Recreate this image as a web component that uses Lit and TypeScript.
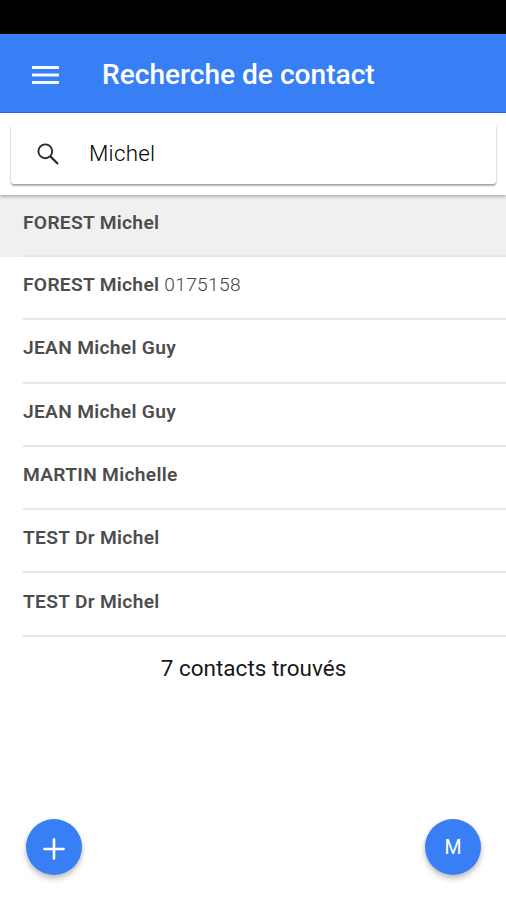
import { LitElement, html, css } from "lit";
import { customElement, state } from "lit/decorators.js";

interface Contact { name: string; extra?: string; }

@customElement("app-root")
export class AppRoot extends LitElement {
  static styles = css`
    :host { display: flex; flex-direction: column; position: relative; height: 900px; box-sizing: border-box; background: #fff; font-family: Roboto, sans-serif; overflow: hidden; }
    .status { height: 34px; background: #000; flex: none; }
    .bar { height: 79px; flex: none; background: #387ef5; color: #fff; display: flex; align-items: center; padding-left: 32px; box-sizing: border-box; border-bottom: 1px solid #2868da; }
    .menu { width: 27px; height: 18px; margin-top: 3px; }
    .title { margin: 3px 0 0 43px; font-size: 28.1px; line-height: 36px; font-weight: 500; white-space: nowrap; }
    .searchbar { flex: none; height: 82px; box-sizing: border-box; padding: 11px 10px 11px 11px; background: #fff; box-shadow: 0 2px 3px rgba(0,0,0,.26); position: relative; }
    .field { height: 60px; border-radius: 3px; background: #fff; display: flex; align-items: center; box-shadow: 0 2px 2px rgba(0,0,0,.25), 0 1px 2px rgba(0,0,0,.2); }
    .search { width: 22px; height: 22px; margin-left: 26px; }
    .query { margin: -3px 0 0 30px; font-size: 22.4px; font-weight: 300; letter-spacing: .25px; color: #000; line-height: 28px; }
    .list { list-style: none; margin: 0; padding: 0; flex: none; }
    .row { height: 63.3px; box-sizing: border-box; padding-left: 23px; }
    .row.active { background: #f0f0f0; height: 62px; }
    .label { height: 100%; box-sizing: border-box; border-bottom: 2px solid #e7e7e7; display: flex; align-items: center; padding-bottom: 5px; font-size: 19.2px; letter-spacing: .3px; line-height: 24px; font-weight: 300; color: #444; white-space: pre; }
    .label b { font-weight: 600; color: #4d4d4d; }
    .count { margin: 17px 0 0; text-align: center; font-size: 22.5px; line-height: 28px; color: #181818; padding-left: 1px; }
    .actions { margin-top: auto; display: flex; justify-content: space-between; padding: 0 25px 25px 26px; }
    .fab { width: 56px; height: 56px; border: 0; padding: 0; border-radius: 50%; background: #387ef5; color: #fff; display: flex; align-items: center; justify-content: center; font: 400 19.5px Roboto, sans-serif; box-shadow: 0 4px 6px rgba(0,0,0,.2), 0 2px 4px rgba(0,0,0,.1); }
    .plus { width: 22px; height: 22px; margin-top: 3px; }
  `;
  @state() contacts: Contact[] = [
    { name: "FOREST Michel" }, { name: "FOREST Michel", extra: "0175158" },
    { name: "JEAN Michel Guy" }, { name: "JEAN Michel Guy" }, { name: "MARTIN Michelle" },
    { name: "TEST Dr Michel" }, { name: "TEST Dr Michel" },
  ];
  render() {
    return html`
      <div class="status"></div>
      <header class="bar">
        <svg class="menu" viewBox="0 0 27 18"><path fill="#f4f8ff" d="M0 0h27v3H0zM0 7.5h27v3H0zM0 15h27v3H0z"/></svg>
        <h1 class="title">Recherche de contact</h1>
      </header>
      <div class="searchbar"><div class="field">
        <svg class="search" viewBox="0 0 22 22" fill="none" stroke="#2b2b2b"><circle cx="8.3" cy="8.3" r="6.9" stroke-width="1.9"/><path stroke-width="2.3" d="M13.3 13.3 21 21"/></svg>
        <span class="query">Michel</span>
      </div></div>
      <ul class="list">
        ${this.contacts.map((c, i) => html`<li class="row ${i === 0 ? "active" : ""}"><div class="label"><b>${c.name}</b>${c.extra ? html`<span> ${c.extra}</span>` : ""}</div></li>`)}
      </ul>
      <p class="count">${this.contacts.length} contacts trouvés</p>
      <div class="actions">
        <button class="fab" aria-label="Ajouter"><svg class="plus" viewBox="0 0 22 22"><path stroke="#fff" stroke-width="2.6" stroke-linecap="round" d="M11 1.4v19.2M1.4 11h19.2"/></svg></button>
        <button class="fab">M</button>
      </div>`;
  }
}
